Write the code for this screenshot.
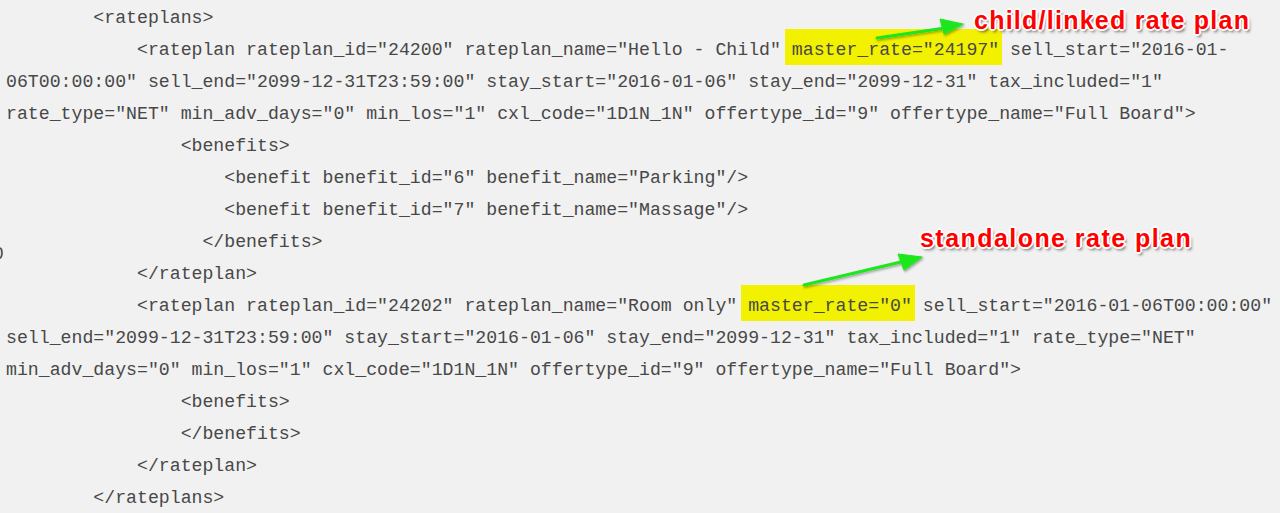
import React from "react";

const mono = { fontFamily: '"Liberation Mono", "DejaVu Sans Mono", monospace' };

const Hl = ({ children }) => (
  <span className="bg-[#f2f100] -ml-[7px] pl-[7px] -mr-[3px] pr-[3px] pt-[11px] pb-[5px]">
    {children}
  </span>
);

const lines = [
  [" ".repeat(8) + "<rateplans>"],
  [
    " ".repeat(12) + '<rateplan rateplan_id="24200" rateplan_name="Hello - Child" ',
    <Hl key="a">master_rate="24197"</Hl>,
    ' sell_start="2016-01-',
  ],
  ['06T00:00:00" sell_end="2099-12-31T23:59:00" stay_start="2016-01-06" stay_end="2099-12-31" tax_included="1"'],
  ['rate_type="NET" min_adv_days="0" min_los="1" cxl_code="1D1N_1N" offertype_id="9" offertype_name="Full Board">'],
  [" ".repeat(16) + "<benefits>"],
  [" ".repeat(20) + '<benefit benefit_id="6" benefit_name="Parking"/>'],
  [" ".repeat(20) + '<benefit benefit_id="7" benefit_name="Massage"/>'],
  [" ".repeat(18) + "</benefits>"],
  [" ".repeat(12) + "</rateplan>"],
  [
    " ".repeat(12) + '<rateplan rateplan_id="24202" rateplan_name="Room only" ',
    <Hl key="b">master_rate="0"</Hl>,
    ' sell_start="2016-01-06T00:00:00"',
  ],
  ['sell_end="2099-12-31T23:59:00" stay_start="2016-01-06" stay_end="2099-12-31" tax_included="1" rate_type="NET"'],
  ['min_adv_days="0" min_los="1" cxl_code="1D1N_1N" offertype_id="9" offertype_name="Full Board">'],
  [" ".repeat(16) + "<benefits>"],
  [" ".repeat(16) + "</benefits>"],
  [" ".repeat(12) + "</rateplan>"],
  [" ".repeat(8) + "</rateplans>"],
];

const Note = ({ children, className }) => (
  <div
    className={
      "absolute text-[25px] font-bold text-[#ff0000] leading-none whitespace-nowrap [text-shadow:1px_1px_0_#fff,-1px_-1px_0_#fff,1px_-1px_0_#fff,-1px_1px_0_#fff,2px_0_0_#fff,-2px_0_0_#fff,0_2px_0_#fff,0_-2px_0_#fff,2px_3px_3px_rgba(0,0,0,0.55)] " +
      className
    }
    style={{ fontFamily: '"Liberation Sans", Arial, sans-serif' }}
  >
    {children}
  </div>
);

export default function App() {
  return (
    <div className="relative w-[1280px] h-[513px] overflow-hidden bg-[#f1f1f1]">
      <pre
        className="pl-[6px] pt-[2px] text-[18.2px] leading-[32px] text-[#484848]"
        style={mono}
      >
        {lines.map((l, i) => (
          <div key={i}>{l}</div>
        ))}
      </pre>

      <span className="absolute -left-[7px] top-[241px] text-[18px] text-[#484848]" style={mono}>
        0
      </span>

      <Note className="left-[974px] top-[8px] tracking-[1.25px]">child/linked rate plan</Note>
      <Note className="left-[920px] top-[226px] tracking-[1.45px]">standalone rate plan</Note>

      <svg className="absolute inset-0 pointer-events-none" width="1280" height="513">
        <defs>
          <filter id="sh" x="-20%" y="-50%" width="140%" height="200%">
            <feDropShadow dx="1" dy="1.5" stdDeviation="1" floodColor="#000" floodOpacity="0.35" />
          </filter>
        </defs>
        <g filter="url(#sh)" fill="#1ee61e" stroke="#1ee61e" strokeLinecap="round">
          <line x1="877" y1="38" x2="945" y2="28" strokeWidth="3" />
          <polygon points="963,24 940,19 944,34" strokeWidth="1" strokeLinejoin="round" />
          <line x1="804" y1="285" x2="905" y2="261" strokeWidth="3" />
          <polygon points="922,257 898,254 904,270" strokeWidth="1" strokeLinejoin="round" />
        </g>
      </svg>
    </div>
  );
}
